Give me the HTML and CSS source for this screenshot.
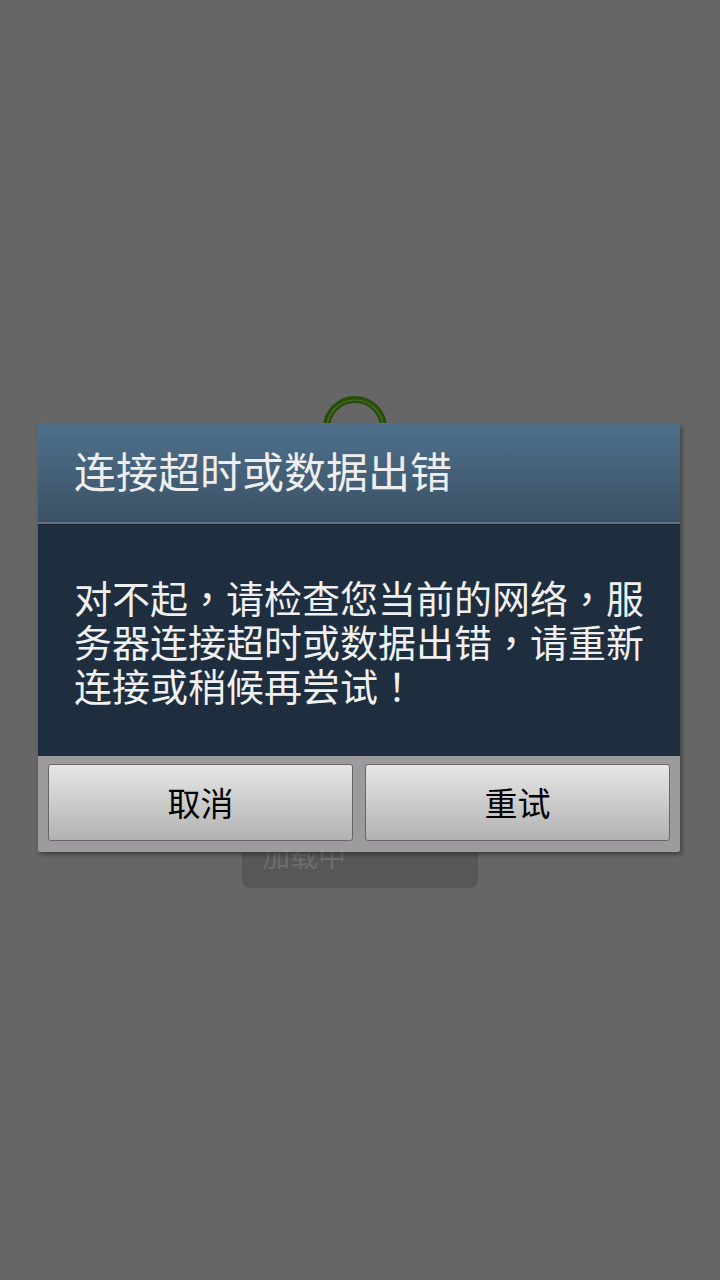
FILE: index.html
```html
<!DOCTYPE html>
<html lang="zh-CN">
<head>
    <meta charset="UTF-8">
    <meta name="viewport" content="width=device-width, initial-scale=1.0">
    <title>连接超时或数据出错</title>
    <link rel="stylesheet" href="styles.css">
</head>
<body>
    <!-- 底層：加載中 -->
    <div class="loading">
        <svg class="spinner" width="64" height="64" viewBox="0 0 64 64">
            <circle cx="32" cy="32" r="28.5" fill="none" stroke="#2b4d0b" stroke-width="7"/>
            <circle cx="32" cy="32" r="28" fill="none" stroke="#4a6e2b" stroke-width="1.2"/>
        </svg>
        <div class="toast">
            <span>加载中</span>
        </div>
    </div>

    <!-- 對話框 -->
    <div class="overlay">
        <div class="dialog">
            <div class="dialog-title">连接超时或数据出错</div>
            <div class="dialog-body">
                <p>
                    <span class="line">对不起<span class="pc" lang="zh-Hant">，</span>请检查您当前的网络<span class="pc" lang="zh-Hant">，</span>服</span>
                    <span class="line">务器连接超时或数据出错<span class="pc" lang="zh-Hant">，</span>请重新</span>
                    <span class="line">连接或稍候再尝试<span class="pc" lang="zh-Hant">！</span></span>
                </p>
            </div>
            <div class="dialog-buttons">
                <button type="button">取消</button>
                <button type="button">重试</button>
            </div>
        </div>
    </div>
</body>
</html>
```

FILE: styles.css
```css
html, body {
    margin: 0;
    padding: 0;
}

body {
    width: 720px;
    height: 1280px;
    background-color: #666666;
    font-family: "Noto Sans CJK SC", "Noto Sans", sans-serif;
    overflow: hidden;
}

.loading {
    display: flex;
    flex-direction: column;
    align-items: center;
    padding-top: 396px;
}

.spinner {
    display: block;
    margin-left: -10px;
}

.toast {
    width: 236px;
    height: 110px;
    margin-top: 318px;
    background-color: #575757;
    border-radius: 8px;
    box-sizing: border-box;
    padding: 63px 0 0 20px;
}

.toast span {
    font-size: 28px;
    line-height: 1;
    color: #6c6c6c;
}

.overlay {
    position: fixed;
    top: 0;
    left: 0;
    right: 0;
    bottom: 0;
    padding-top: 423px;
    display: flex;
    justify-content: center;
    align-items: flex-start;
}

.dialog {
    width: 642px;
    margin-left: -2px;
    border-radius: 3px;
    overflow: hidden;
    box-shadow: 2px 3px 4px rgba(0, 0, 0, 0.35);
}

.dialog-title {
    height: 101px;
    display: flex;
    align-items: center;
    padding: 0 0 6px 36px;
    box-sizing: border-box;
    background: linear-gradient(to bottom, #4f718c, #3b5165);
    border-bottom: 2px solid #617080;
    color: #eeeeee;
    font-size: 42px;
    line-height: 1;
}

.dialog-body {
    background-color: #1e2e3e;
    border-top: 1px solid #15212c;
    padding: 50px 20px 49px 36px;
}

.dialog-body p {
    margin: 0;
    color: #f0f0f0;
    font-size: 38px;
    line-height: 44px;
}

.line {
    display: block;
    white-space: nowrap;
}

/* 標點置中 */
.pc {
    font-family: "Noto Sans CJK TC", sans-serif;
}

.dialog-buttons {
    display: flex;
    gap: 12px;
    padding: 8px 10px 11px 10px;
    background-color: #9d9b9d;
}

.dialog-buttons button {
    flex: 1;
    height: 77px;
    padding: 0;
    border: 1px solid #666666;
    border-radius: 3px;
    background: linear-gradient(to bottom, #e6e6e6, #b2b2b2);
    color: #000000;
    font-family: "Noto Sans CJK SC", "Noto Sans", sans-serif;
    font-size: 33px;
    line-height: 1;
}
```
